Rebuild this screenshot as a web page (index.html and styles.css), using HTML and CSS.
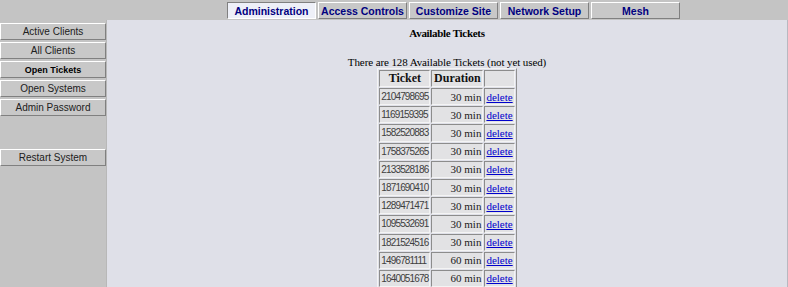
FILE: index.html
```html
<!DOCTYPE html>
<html>
<head>
  <title>Tickets</title>
  <link rel="stylesheet" href="styles.css">
</head>
<body>
  <div class="topbar">
    <a class="tab active" href="#">Administration</a>
    <a class="tab" href="#">Access Controls</a>
    <a class="tab" href="#">Customize Site</a>
    <a class="tab" href="#">Network Setup</a>
    <a class="tab" href="#">Mesh</a>
  </div>
  <div class="main">
    <div class="sidebar">
      <a class="side-btn" href="#">Active Clients</a>
      <a class="side-btn" href="#">All Clients</a>
      <a class="side-btn current" href="#">Open Tickets</a>
      <a class="side-btn" href="#">Open Systems</a>
      <a class="side-btn" href="#">Admin Password</a>
      <a class="side-btn restart" href="#">Restart System</a>
    </div>
    <div class="content">
      <h3>Available Tickets</h3>
      <p class="count">There are 128 Available Tickets (not yet used)</p>
      <table class="tickets">
        <tr><th>Ticket</th><th class="c-dur">Duration</th><th></th></tr>
        <tr><td class="num">2104798695</td><td class="dur">30 min</td><td><a href="#">delete</a></td></tr>
        <tr><td class="num">1169159395</td><td class="dur">30 min</td><td><a href="#">delete</a></td></tr>
        <tr><td class="num">1582520883</td><td class="dur">30 min</td><td><a href="#">delete</a></td></tr>
        <tr><td class="num">1758375265</td><td class="dur">30 min</td><td><a href="#">delete</a></td></tr>
        <tr><td class="num">2133528186</td><td class="dur">30 min</td><td><a href="#">delete</a></td></tr>
        <tr><td class="num">1871690410</td><td class="dur">30 min</td><td><a href="#">delete</a></td></tr>
        <tr><td class="num">1289471471</td><td class="dur">30 min</td><td><a href="#">delete</a></td></tr>
        <tr><td class="num">1095532691</td><td class="dur">30 min</td><td><a href="#">delete</a></td></tr>
        <tr><td class="num">1821524516</td><td class="dur">30 min</td><td><a href="#">delete</a></td></tr>
        <tr><td class="num">1496781111</td><td class="dur">60 min</td><td><a href="#">delete</a></td></tr>
        <tr><td class="num">1640051678</td><td class="dur">60 min</td><td><a href="#">delete</a></td></tr>
      </table>
    </div>
  </div>
</body>
</html>
```

FILE: styles.css
```css
body {
  margin: 0;
  background-color: #c4c4c4;
  font-family: "Liberation Sans", Arial, sans-serif;
  font-size: 10px;
  overflow: hidden;
}

.topbar {
  display: flex;
  gap: 2px;
  height: 20px;
  padding-left: 227px;
  padding-top: 2px;
  box-sizing: border-box;
  background-color: #c4c4c4;
}

.tab {
  display: flex;
  justify-content: center;
  align-items: center;
  width: 89px;
  height: 17px;
  box-sizing: border-box;
  background-color: #c8c8c8;
  border-top: 1px solid #ffffff;
  border-left: 1px solid #ffffff;
  border-bottom: 1px solid #808080;
  border-right: 1px solid #808080;
  color: #000080;
  font-weight: bold;
  font-size: 10.5px;
  text-decoration: none;
  white-space: nowrap;
}

.tab.active {
  background-color: #eef0f8;
  border-top-color: #808080;
  border-left-color: #808080;
  border-bottom-color: #ffffff;
  border-right-color: #ffffff;
}

.main {
  display: flex;
  height: 267px;
  overflow: hidden;
}

.sidebar {
  display: flex;
  flex-direction: column;
  gap: 2px;
  width: 106px;
  padding-top: 3px;
  border-right: 1px solid #b8b8b8;
  background-color: #c4c4c4;
}

.side-btn {
  display: flex;
  justify-content: center;
  align-items: center;
  width: 106px;
  height: 17px;
  box-sizing: border-box;
  background-color: #c8c8c8;
  border-top: 1px solid #ffffff;
  border-left: 1px solid #ffffff;
  border-bottom: 1px solid #808080;
  border-right: 1px solid #808080;
  color: #202020;
  font-size: 10px;
  text-decoration: none;
}

.side-btn.current {
  font-weight: bold;
  font-size: 9px;
  color: #000000;
}

.side-btn.restart {
  margin-top: 31px;
}

.content {
  flex: 1;
  background-color: #dfe0e8;
  border-right: 1px solid #b8b8c0;
  text-align: center;
  font-family: "Liberation Serif", "Times New Roman", serif;
  font-size: 11px;
}

h3 {
  font-size: 11px;
  letter-spacing: -0.3px;
  margin: 7px 0 0 0;
}

.count {
  margin: 17px 0 0 0;
  letter-spacing: -0.1px;
}

.tickets {
  margin: 0 auto;
  border-spacing: 1px;
  border-top: 1px solid #f4f4f4;
  border-left: 1px solid #f4f4f4;
  border-bottom: 1px solid #909090;
  border-right: 1px solid #909090;
  font-family: "Liberation Serif", "Times New Roman", serif;
  font-size: 11px;
}

.tickets th,
.tickets td {
  height: 15.2px;
  padding: 0 1px;
  background-color: #e2e2e4;
  border-top: 1px solid #8c8c8c;
  border-left: 1px solid #8c8c8c;
  border-bottom: 1px solid #f4f4f4;
  border-right: 1px solid #f4f4f4;
}

.tickets th {
  height: 15px;
  font-size: 12px;
  color: #111111;
}

.c-dur {
  width: 48px;
}

.tickets td.num {
  font-family: "Liberation Sans", Arial, sans-serif;
  font-size: 10px;
  letter-spacing: -0.85px;
  color: #404040;
  text-align: left;
}

.tickets td.dur {
  text-align: right;
  font-size: 11px;
  color: #202020;
}

.tickets a {
  color: #0000cc;
  font-size: 11px;
}
```
